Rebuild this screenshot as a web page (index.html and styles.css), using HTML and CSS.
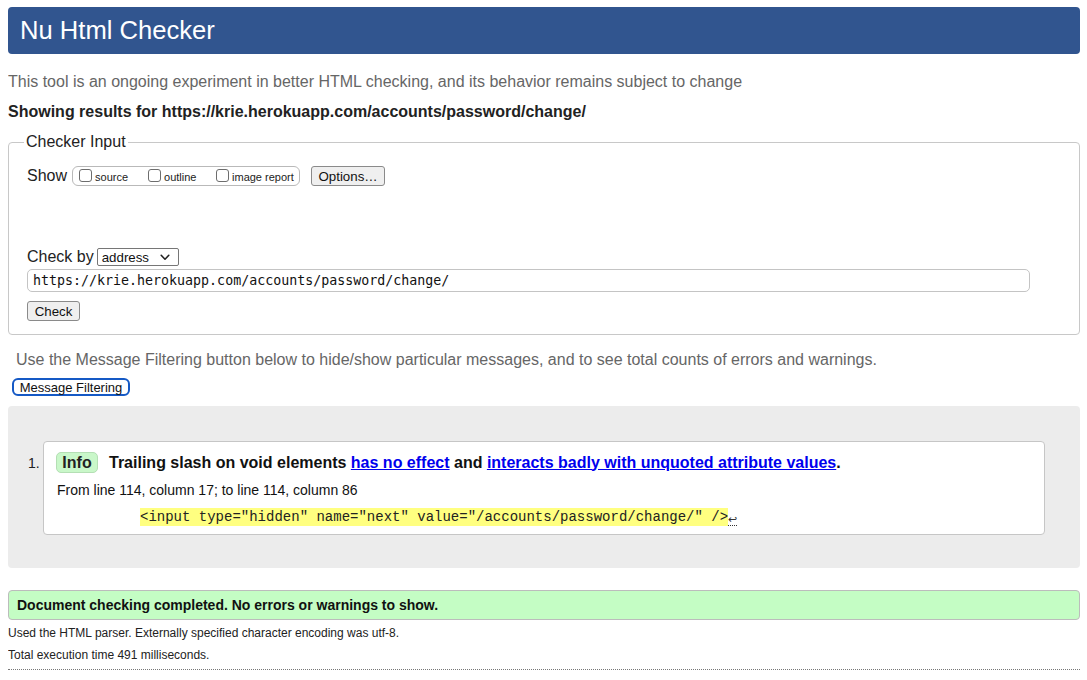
FILE: index.html
```html
<!DOCTYPE html>
<html>
<head>
<meta charset="utf-8">
<title>Nu Html Checker</title>
<link rel="stylesheet" href="styles.css">
</head>
<body>
<h1 class="title">Nu Html Checker</h1>
<p class="intro">This tool is an ongoing experiment in better HTML checking, and its behavior remains subject to change</p>
<p class="showing">Showing results for https://krie.herokuapp.com/accounts/password/change/</p>
<form class="form">
  <fieldset class="checker">
    <legend class="legend">Checker Input</legend>
    <div class="show-row">
      <span class="show-label">Show</span>
      <span class="opts">
        <label class="opt"><span class="cb"></span>source</label>
        <label class="opt"><span class="cb"></span>outline</label>
        <label class="opt"><span class="cb"></span>image report</label>
      </span>
      <span class="btn btn-options">Options…</span>
    </div>
    <div class="checkby-row">
      <span class="checkby-label">Check by</span>
      <span class="select">address<svg class="chev" width="10" height="7" viewBox="0 0 10 7"><path d="M1.2 1.3 L5 5.2 L8.8 1.3" fill="none" stroke="#222" stroke-width="1.6" stroke-linecap="round" stroke-linejoin="round"/></svg></span>
    </div>
    <div class="url">https://krie.herokuapp.com/accounts/password/change/</div>
    <span class="btn btn-check">Check</span>
  </fieldset>
</form>
<p class="filter-note">Use the Message Filtering button below to hide/show particular messages, and to see total counts of errors and warnings.</p>
<span class="btn-filter">Message Filtering</span>
<div class="results">
  <ol class="msg-list">
    <li class="msg-item">
      <div class="msg">
        <p class="msg-title"><span class="badge">Info</span><span class="msg-text">Trailing slash on void elements <a href="#" class="link">has no effect</a> and <a href="#" class="link">interacts badly with unquoted attribute values</a>.</span></p>
        <p class="loc">From line 114, column 17; to line 114, column 86</p>
        <p class="extract"><code class="hl">&lt;input type="hidden" name="next" value="/accounts/password/change/" /&gt;</code><span class="lf">↩</span></p>
      </div>
    </li>
  </ol>
</div>
<p class="success">Document checking completed. No errors or warnings to show.</p>
<p class="small">Used the HTML parser. Externally specified character encoding was utf-8.</p>
<p class="small">Total execution time 491 milliseconds.</p>
<div class="dotted"></div>
</body>
</html>
```

FILE: styles.css
```css
* { box-sizing: border-box; }
html, body { background: #fff; }
body {
  margin: 7px 7px 0 8px;
  font-family: "Liberation Sans", Arial, Helvetica, sans-serif;
  font-size: 16px;
  color: #222;
}
.title {
  margin: 0;
  height: 47px;
  line-height: 46px;
  padding: 0 12px;
  background: #31558f;
  color: #fff;
  font-size: 25.6px;
  font-weight: normal;
  border-radius: 4px;
}
.intro {
  margin: 18px 0 0;
  line-height: 20px;
  color: #666;
}
.showing {
  margin: 10px 0 0;
  line-height: 20px;
  font-weight: bold;
  color: #222;
}
.form { margin: 0; }
.checker {
  margin: 11px 0 0;
  padding: 0 18px 13px;
  border: 1px solid #c8c8c8;
  border-radius: 4px;
  min-width: 0;
}
.legend {
  padding: 0 2px;
  margin-left: -3px;
  line-height: 18px;
  color: #222;
}
.show-row {
  display: flex;
  align-items: center;
  margin-top: 15px;
  height: 20px;
}
.show-label { margin-right: 5px; }
.opts {
  display: flex;
  align-items: center;
  height: 20px;
  width: 228px;
  border: 1px solid #b9b9b9;
  border-radius: 6px;
  padding: 0 0 0 6px;
  font-size: 11px;
  gap: 0;
}
.opt {
  display: flex;
  align-items: center;
  padding-top: 2px;
}
.opt:nth-child(1) { width: 69px; }
.opt:nth-child(2) { width: 68px; }
.cb {
  width: 13px;
  height: 13px;
  border: 1px solid #6d6d6d;
  border-radius: 3px;
  background: #fff;
  margin-right: 3px;
  margin-top: -3px;
}
.btn {
  display: inline-flex;
  align-items: center;
  justify-content: center;
  height: 20px;
  border: 1px solid #8a8a8a;
  border-radius: 3px;
  background: #efefef;
  font-size: 13.3px;
  color: #111;
}
.btn-options {
  width: 74px;
  margin-left: 11px;
}
.checkby-row {
  display: flex;
  align-items: center;
  margin-top: 62px;
  height: 18px;
}
.checkby-label { margin-right: 3px; }
.select {
  display: inline-flex;
  align-items: center;
  justify-content: space-between;
  width: 82px;
  height: 18px;
  border: 1px solid #767676;
  border-radius: 2px;
  padding: 0 8px 0 4px;
  font-size: 13.3px;
  color: #111;
  background: #fff;
}
.url {
  margin-top: 3px;
  width: 1003px;
  height: 23px;
  line-height: 22px;
  border: 1px solid #c4c4c4;
  border-radius: 5px;
  padding: 0 5px;
  font-family: "DejaVu Sans Mono", "Liberation Mono", monospace;
  font-size: 13.3px;
  color: #111;
}
.btn-check {
  margin-top: 9px;
  width: 53px;
  font-size: 13.3px;
}
.filter-note {
  margin: 15px 0 0;
  padding-left: 8px;
  line-height: 20px;
  color: #666;
}
.btn-filter {
  display: inline-flex;
  align-items: center;
  justify-content: center;
  margin: 8px 0 0 4px;
  width: 118px;
  height: 18px;
  border: 2px solid #1559c5;
  border-radius: 6px;
  font-size: 13px;
  color: #111;
  background: #fff;
}
.results {
  margin-top: 10px;
  background: #ececec;
  border-radius: 4px;
  padding: 35px 35px 33px 35px;
}
.msg-list {
  margin: 0;
  padding: 0;
  list-style: none;
  counter-reset: item;
}
.msg-item {
  position: relative;
  counter-increment: item;
}
.msg-item::before {
  content: counter(item) ".";
  position: absolute;
  left: -15px;
  top: 14px;
  font-size: 14px;
  color: #222;
}
.msg {
  width: 1002px;
  height: 94px;
  background: #fff;
  border: 1px solid #c6c6c6;
  border-radius: 4px;
  padding: 10px 12px 0;
}
.msg-title {
  margin: 0;
  display: flex;
  align-items: center;
  height: 21px;
}
.badge {
  display: inline-flex;
  align-items: center;
  justify-content: center;
  width: 42px;
  height: 21px;
  background: #c9f7c9;
  border: 1px solid #b4dfb4;
  border-radius: 5px;
  font-weight: bold;
  color: #222;
  margin-right: 11px;
}
.msg-text {
  font-weight: bold;
  color: #111;
}
.link {
  color: #0000ee;
}
.loc {
  margin: 9px 0 0 1px;
  font-size: 14px;
  line-height: 16px;
  color: #111;
}
.extract {
  margin: 10px 0 0 84px;
  line-height: 18px;
  display: flex;
  align-items: center;
}
.hl {
  background: #ffff80;
  font-family: "Liberation Mono", "Courier New", monospace;
  font-size: 14px;
  line-height: 18px;
  color: #222;
}
.lf {
  font-size: 11px;
  line-height: 12px;
  margin-top: 4px;
  color: #333;
  border-bottom: 1px dotted #333;
}
.success {
  margin: 22px 0 0;
  height: 30px;
  line-height: 28px;
  padding: 0 8px;
  background: #c4fdc4;
  border: 1px solid #bcbcbc;
  border-radius: 4px;
  font-size: 14px;
  font-weight: bold;
  color: #111;
}
.small {
  margin: 6px 0 0;
  font-size: 12px;
  line-height: 14px;
  color: #222;
}
.small + .small { margin-top: 8px; }
.dotted {
  margin-top: 7px;
  border-top: 1px dotted #777;
}
```
